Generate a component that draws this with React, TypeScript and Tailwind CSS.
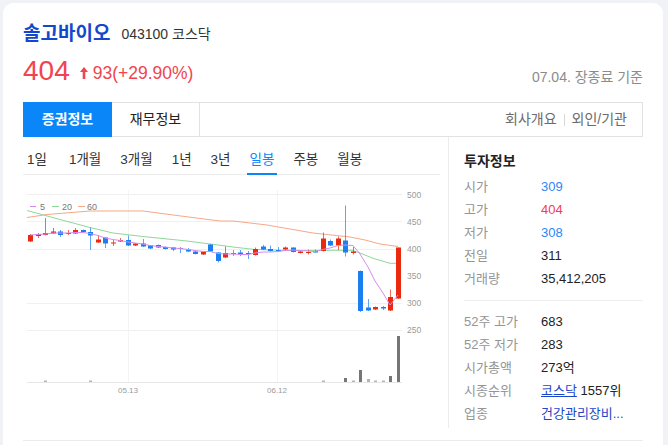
import React from 'react'

const FONT = { fontFamily: '"Liberation Sans", "Noto Sans CJK KR", sans-serif' }

// [bodyTop, bodyBottom, wickTop, wickBottom, colour] in page pixels
const candles: [number, number, number, number, 'r' | 'b'][] = [
  [235, 241.5, 234, 242, 'r'],
  [234, 236, 233, 238, 'r'],
  [233, 235, 218, 235.5, 'r'],
  [231.5, 233.5, 228, 234, 'r'],
  [231.5, 235, 230, 237, 'b'],
  [233, 234, 230, 235, 'r'],
  [230, 233.5, 228, 234, 'r'],
  [230, 232, 229.5, 232, 'b'],
  [232, 235.5, 227.5, 250, 'b'],
  [239.5, 242.5, 235, 243, 'r'],
  [237.5, 243.5, 237, 248, 'b'],
  [242.5, 243.5, 240, 246, 'r'],
  [240, 241.5, 238, 242, 'r'],
  [240, 245.5, 235.5, 246, 'b'],
  [243.5, 245.5, 243, 246, 'r'],
  [243.5, 246.5, 239, 247, 'b'],
  [245, 248.5, 245, 249, 'b'],
  [245, 247.5, 244.5, 248, 'b'],
  [247, 249, 246.5, 249.5, 'b'],
  [247.5, 249.5, 247, 251, 'b'],
  [248, 249, 247, 253, 'b'],
  [249.5, 251.5, 248, 252, 'b'],
  [251.5, 254, 251, 254.5, 'b'],
  [251.5, 254.5, 251, 255, 'r'],
  [244.5, 251.5, 244, 252, 'b'],
  [252.5, 261, 252, 262.5, 'b'],
  [253, 257.5, 246.5, 258, 'r'],
  [253, 254, 250, 256, 'b'],
  [252.5, 254, 250, 256, 'b'],
  [253, 254, 251, 259, 'b'],
  [249, 255, 247.5, 255.5, 'r'],
  [246.5, 249.5, 245, 250, 'b'],
  [249, 251, 245.5, 251.5, 'b'],
  [250, 251, 247, 251.5, 'b'],
  [247.5, 249.5, 246.5, 250, 'r'],
  [247.5, 252, 247.5, 252.5, 'b'],
  [251.5, 253, 250, 253.5, 'r'],
  [252, 253, 249.5, 254.5, 'r'],
  [251, 252.5, 249.5, 252.5, 'b'],
  [238.5, 251, 232.5, 251.5, 'r'],
  [241, 245.5, 239.5, 246, 'b'],
  [238.5, 245.5, 236.5, 250, 'r'],
  [240.5, 252.5, 205.5, 256.5, 'b'],
  [251.5, 253, 247, 254.5, 'r'],
  [271, 311, 270.5, 312, 'b'],
  [307.5, 310.5, 299, 311, 'b'],
  [307, 309.5, 306.5, 310, 'r'],
  [307, 308.5, 306, 310, 'b'],
  [297, 310.5, 289.5, 311, 'r'],
  [247.5, 298.5, 247.5, 299, 'r'],
]

const volumes: [number, number][] = [
  [2, 380.5], [8, 380.5], [39, 380.5], [42, 378], [43, 380.5], [44, 370], [45, 379], [46, 380.5], [47, 380.5], [48, 376], [49, 336],
]

const ma5 = '30,235 38,234.5 46,234 53,233 60,233 68,233 75,232.5 83,232.5 90,233.5 98,235.5 105,238 113,239.5 120,240.5 128,242 135,243 143,244 150,245.5 158,246.5 165,247 173,248 180,248.5 188,249.5 195,250.5 203,251.5 210,251.5 218,253.5 225,254 233,254 240,254.5 248,254.5 255,253 263,252 270,252 278,251.5 285,250.5 293,250 300,250.5 308,251 315,251.5 323,249.5 330,248 338,245.5 345,245 353,245.5 360,254 368,267 375,281 383,293 390,305 398,295'
const ma20 = '27,210.5 40,214 60,219.5 90,227.5 113,233 143,236.5 187,241 218,245 233,247 253,249.3 287,250.5 333,250.3 352,250.3 360,253 373,258.3 390,263.3 398,263.3'
const ma60 = '27,217.5 47,214.5 90,211 143,211 177,215.5 220,221 233,221 267,225 313,233 350,237 365,240 380,244 398,246.5'

const RED = '#ea2a0e'
const BLUE = '#1b7ff2'

function Chart() {
  const cx = (i: number) => Math.round(30.3 + i * 7.5) + 0.5
  return (
    <svg width={417} height={253} viewBox="23 175 417 253" className="block">
      {[194.5, 221.5, 249.5, 303.5, 330.5].map((y) => (
        <line key={y} x1={27} x2={402} y1={y} y2={y} stroke="#f0f0f0" />
      ))}
      <line x1={27} x2={402} y1={382.5} y2={382.5} stroke="#e6e6e6" />
      <line x1={128.5} x2={128.5} y1={190} y2={382} stroke="#f4f4f4" />
      <line x1={277.5} x2={277.5} y1={190} y2={382} stroke="#f4f4f4" />

      {[['500', 195], ['450', 222], ['400', 249], ['350', 276], ['300', 303], ['250', 330]].map(([t, y]) => (
        <text key={t} x={407} y={(y as number) + 3} fontSize={8.5} fill="#9a9a9a">{t}</text>
      ))}
      <text x={128} y={393} fontSize={8} fill="#9a9a9a" textAnchor="middle">05.13</text>
      <text x={277} y={393} fontSize={8} fill="#9a9a9a" textAnchor="middle">06.12</text>

      <line x1={30} x2={36} y1={206.5} y2={206.5} stroke="#d58cf0" />
      <text x={40} y={209.5} fontSize={9} fill="#777">5</text>
      <line x1={52} x2={59} y1={206.5} y2={206.5} stroke="#8fd89a" />
      <text x={62} y={209.5} fontSize={9} fill="#777">20</text>
      <line x1={78} x2={85} y1={206.5} y2={206.5} stroke="#f7a888" />
      <text x={87} y={209.5} fontSize={9} fill="#777">60</text>

      <polyline points={ma60} fill="none" stroke="#f7a888" strokeWidth={1} />
      <polyline points={ma20} fill="none" stroke="#8fd89a" strokeWidth={1} />

      {candles.map(([t, b, wt, wb, c], i) => {
        const x = cx(i)
        const col = c === 'r' ? RED : BLUE
        return (
          <g key={i}>
            <line x1={x} x2={x} y1={wt} y2={wb} stroke={col} strokeOpacity={0.7} />
            <rect x={x - 2.5} y={t} width={5} height={Math.max(b - t, 1)} fill={col} />
          </g>
        )
      })}

      <polyline points={ma5} fill="none" stroke="#d58cf0" strokeWidth={1} />

      {volumes.map(([i, top]) => (
        <rect key={i} x={cx(i) - 1.5} y={top} width={3} height={382 - top} fill={382 - top > 3 ? '#767676' : '#b5b5b5'} />
      ))}
    </svg>
  )
}

function Row({ label, children }: { label: string; children: React.ReactNode }) {
  return (
    <div className="flex h-[23px] items-center text-[13px]">
      <span className="w-[77px] text-[#959595]">{label}</span>
      <span className="text-[#222]">{children}</span>
    </div>
  )
}

export default function App() {
  const periods = ['1일', '1개월', '3개월', '1년', '3년', '일봉', '주봉', '월봉']
  return (
    <div className="min-h-[445px] bg-[#f1f2f5] pl-[3px] pt-[3px] overflow-hidden" style={FONT}>
      <div className="h-[470px] w-[660px] rounded-[10px] bg-white px-5 pt-[17px]">
        <div className="flex h-[28px] items-center gap-[11px]">
          <h1 className="text-[19px] font-bold leading-[28px] text-[#1448cc]">솔고바이오</h1>
          <span className="text-[14px] leading-[28px] text-[#333]">043100 코스닥</span>
        </div>

        <div className="mt-[7px] flex h-[32px] items-end justify-between">
          <div className="flex h-[32px] items-center text-[#f2434f]">
            <span className="text-[28px] leading-[32px]">404</span>
            <svg width={8} height={12} viewBox="0 0 8 12" className="ml-[10px] mr-[5px] mt-[4px]">
              <path d="M4 0 L8 5 H5.3 V12 H2.7 V5 H0 Z" fill="#f2434f" />
            </svg>
            <span className="mt-[3px] text-[17.5px] leading-[24px]">93(+29.90%)</span>
          </div>
          <span className="text-[14px] leading-[20px] text-[#8b8b8b]">07.04. 장종료 기준</span>
        </div>

        <div className="mt-[15px] flex h-[35px] border border-[#e2e2e2]">
          <div className="-my-px -ml-px flex h-[35px] w-[89px] items-center justify-center bg-[#0b86f8] text-[14px] font-bold text-white">
            증권정보
          </div>
          <div className="flex w-[88px] items-center justify-center border-r border-[#e2e2e2] text-[14px] text-[#222]">
            재무정보
          </div>
          <div className="ml-auto flex items-center gap-[7px] pr-[15px] text-[14px] text-[#6a6a6a]">
            <span>회사개요</span>
            <span className="h-[12px] border-l border-[#d8d8d8]" />
            <span>외인/기관</span>
          </div>
        </div>

        <div className="flex gap-[8px]">
          <div className="w-[417px]">
            <div className="flex h-[38px] items-end gap-[13px] border-b border-[#ececec] pl-px">
              {periods.map((p, i) => (
                <div
                  key={p}
                  className={
                    (i === 0 ? 'mr-[3px] ' : '') +
                    (p === '일봉'
                      ? '-mb-px flex h-[28px] items-center border-b-2 border-[#0b86f8] px-[3px] text-[13.5px] text-[#0b86f8]'
                      : '-mb-px flex h-[28px] items-center border-b-2 border-transparent px-[3px] text-[13.5px] text-[#333]')
                  }
                >
                  {p}
                </div>
              ))}
            </div>
            <Chart />
          </div>

          <div className="flex-1 border-l border-[#ececec] pl-[15px] pt-[14px]">
            <div className="text-[14px] font-bold leading-[20px] text-[#222]">투자정보</div>
            <div className="mt-[4px]">
              <Row label="시가"><span className="text-[#2f86f5]">309</span></Row>
              <Row label="고가"><span className="text-[#f23c50]">404</span></Row>
              <Row label="저가"><span className="text-[#2f86f5]">308</span></Row>
              <Row label="전일">311</Row>
              <Row label="거래량">35,412,205</Row>
            </div>
            <div className="mb-[9px] mt-[10px] border-t border-[#eeeeee]" />
            <Row label="52주 고가">683</Row>
            <Row label="52주 저가">283</Row>
            <Row label="시가총액">273억</Row>
            <Row label="시종순위">
              <span className="text-[#1a47c9] underline">코스닥</span> 1557위
            </Row>
            <Row label="업종"><span className="text-[#1a47c9]">건강관리장비...</span></Row>
          </div>
        </div>

        <div className="mt-[12px] border-t border-[#ececec]" />
      </div>
    </div>
  )
}
